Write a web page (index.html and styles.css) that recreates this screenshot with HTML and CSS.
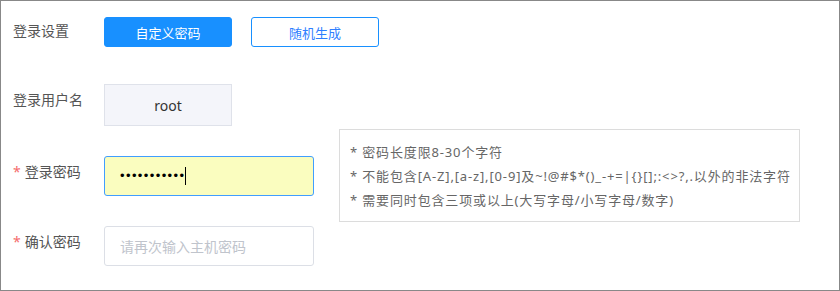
FILE: index.html
```html
<!DOCTYPE html>
<html lang="zh-CN">
<head>
<meta charset="utf-8">
<title>登录设置</title>
<link rel="stylesheet" href="styles.css">
</head>
<body>
<div class="panel">
  <div class="row row-first">
    <div class="label">登录设置</div>
    <div class="btns">
      <button class="btn btn-primary">自定义密码</button>
      <button class="btn btn-outline">随机生成</button>
    </div>
  </div>
  <div class="row row-user">
    <div class="label label-tall">登录用户名</div>
    <div class="readonly">root</div>
  </div>
  <div class="row row-field">
    <div class="label label-tall"><span class="req">*</span>登录密码</div>
    <div class="input input-filled"><span class="dots">•••••••••••</span><span class="caret"></span></div>
    <div class="hint">
      <div>* 密码长度限8-30个字符</div>
      <div>* 不能包含[A-Z],[a-z],[0-9]及~!@#$*()_-+=|{}[];:&lt;&gt;?,.以外的非法字符</div>
      <div>* 需要同时包含三项或以上(大写字母/小写字母/数字)</div>
    </div>
  </div>
  <div class="row row-field">
    <div class="label label-tall"><span class="req">*</span>确认密码</div>
    <div class="input"><span class="placeholder">请再次输入主机密码</span></div>
  </div>
</div>
</body>
</html>
```
FILE: styles.css
```css
* { box-sizing: border-box; }
html, body { margin: 0; padding: 0; background: #fff; }
body {
  font-family: "Noto Sans", "Noto Sans CJK SC", sans-serif;
  color: #555;
}
.panel {
  width: 840px;
  height: 291px;
  border: 1px solid #888;
  padding: 16px 0 0 12px;
}
.row {
  display: flex;
  align-items: flex-start;
}
.row-user { margin-top: 37px; }
.row-field { margin-top: 30px; align-items: center; }
.label {
  flex: 0 0 91px;
  font-size: 14px;
  line-height: 28px;
  color: #555;
  white-space: nowrap;
  align-self: flex-start;
}
.label-tall { padding-top: 2px; }
.req {
  color: #f56c6c;
  margin-right: 4px;
}
.btns { display: flex; gap: 19px; }
.btn {
  width: 128px;
  height: 30px;
  border-radius: 3px;
  font-family: "Noto Sans", "Noto Sans CJK SC", sans-serif;
  font-size: 13px;
  padding: 0;
  cursor: pointer;
}
.btn-primary {
  background: #1890ff;
  border: 1px solid #1890ff;
  color: #fff;
}
.btn-outline {
  background: #fff;
  border: 1px solid #1890ff;
  color: #2f7fff;
}
.readonly {
  width: 128px;
  height: 42px;
  background: #f4f5fa;
  border: 1px solid #dfe2ea;
  display: flex;
  align-items: center;
  justify-content: center;
  font-size: 14px;
  color: #333;
}
.input {
  width: 210px;
  height: 40px;
  border: 1px solid #dcdfe6;
  border-radius: 3px;
  padding: 0 15px;
  display: flex;
  align-items: center;
  background: #fff;
}
.input-filled {
  background: #fafdbf;
  border-color: #409eff;
}
.dots {
  font-family: "Liberation Sans", sans-serif;
  font-size: 13px;
  letter-spacing: 1.4px;
  color: #000;
  line-height: 18px;
}
.caret {
  display: inline-block;
  width: 0;
  height: 18px;
  border-left: 1px solid #000;
  margin-left: 0;
}
.placeholder {
  font-size: 14px;
  color: #c0c4cc;
}
.hint {
  width: 461px;
  height: 93px;
  margin: -27px 0 -26px 25px;
  border: 1px solid #dcdcdc;
  padding: 10px 0 9px 10px;
  font-size: 13px;
  line-height: 24px;
  letter-spacing: 0.85px;
  color: #666;
  white-space: nowrap;
}
```
